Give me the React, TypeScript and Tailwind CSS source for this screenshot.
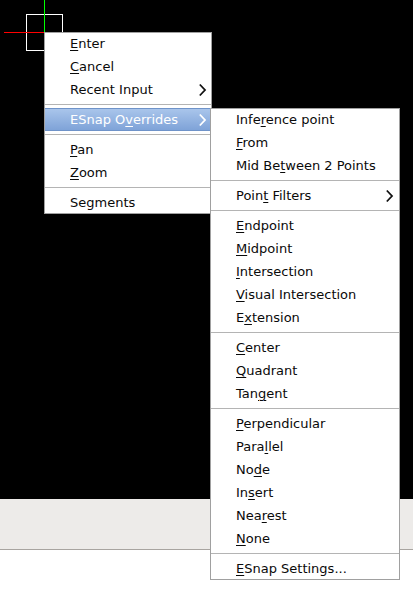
import React from "react";

type Item =
  | { sep: true }
  | { sep?: false; label: string; u?: number; sub?: boolean; hl?: boolean };

const mainItems: Item[] = [
  { label: "Enter", u: 0 },
  { label: "Cancel", u: 0 },
  { label: "Recent Input", sub: true },
  { sep: true },
  { label: "ESnap Overrides", u: 7, sub: true, hl: true },
  { sep: true },
  { label: "Pan", u: 0 },
  { label: "Zoom", u: 0 },
  { sep: true },
  { label: "Segments" },
];

const subItems: Item[] = [
  { label: "Inference point", u: 4 },
  { label: "From", u: 0 },
  { label: "Mid Between 2 Points", u: 6 },
  { sep: true },
  { label: "Point Filters", u: 4, sub: true },
  { sep: true },
  { label: "Endpoint", u: 0 },
  { label: "Midpoint", u: 0 },
  { label: "Intersection", u: 0 },
  { label: "Visual Intersection", u: 0 },
  { label: "Extension", u: 1 },
  { sep: true },
  { label: "Center", u: 0 },
  { label: "Quadrant", u: 0 },
  { label: "Tangent", u: 3 },
  { sep: true },
  { label: "Perpendicular", u: 0 },
  { label: "Parallel", u: 4 },
  { label: "Node", u: 2 },
  { label: "Insert", u: 2 },
  { label: "Nearest", u: 3 },
  { label: "None", u: 0 },
  { sep: true },
  { label: "ESnap Settings...", u: 0 },
];

function Label({ text, u }: { text: string; u?: number }) {
  if (u === undefined) return <span>{text}</span>;
  return (
    <span>
      {text.slice(0, u)}
      <span className="underline decoration-1 underline-offset-[2px]">{text[u]}</span>
      {text.slice(u + 1)}
    </span>
  );
}

function Chevron({ white }: { white?: boolean }) {
  return (
    <svg width="9" height="14" viewBox="0 0 9 14" className="block">
      <path
        d="M1.8 1.5 L7 7 L1.8 12.5"
        fill="none"
        stroke={white ? "#ffffff" : "#111111"}
        strokeWidth="1.8"
      />
    </svg>
  );
}

function Menu({ items, arrowRight }: { items: Item[]; arrowRight: number }) {
  return (
    <div className="flex flex-col">
      {items.map((it, i) => {
        if (it.sep) {
          return (
            <div key={i} className="h-[7px] flex items-center">
              <div className="h-px w-full bg-[#b4b4b4]" />
            </div>
          );
        }
        return (
          <div
            key={i}
            className={
              "relative h-[23px] flex items-center pl-[25px] text-[13px] leading-[23px] " +
              (it.hl
                ? "bg-gradient-to-b from-[#a9c5eb] to-[#7fa3d8] text-white border-y border-[#6f93c9] leading-[21px]"
                : "text-[#0a0a0a]")
            }
          >
            <Label text={it.label} u={it.u} />
            {it.sub && (
              <div className="absolute top-1/2 -translate-y-1/2" style={{ right: arrowRight }}>
                <Chevron white={it.hl} />
              </div>
            )}
          </div>
        );
      })}
    </div>
  );
}

export default function App() {
  return (
    <div
      className="relative w-[413px] h-[591px] overflow-hidden bg-white"
      style={{ fontFamily: '"DejaVu Sans", "Liberation Sans", sans-serif' }}
    >
      <div className="flex flex-col h-full">
        <div className="h-[499px] bg-black" />
        <div className="h-[51px] bg-[#edebe9] border-b border-[#a8a4a0]" />
        <div className="flex-1 bg-white" />
      </div>

      {/* cursor on canvas */}
      <div className="absolute left-[26px] top-[14px] w-[37px] h-[37px] border border-white" />
      <div className="absolute left-[44px] top-0 w-px h-[32px] bg-[#00ff00]" />
      <div className="absolute left-[4px] top-[32px] w-[40px] h-px bg-[#ff0000]" />

      {/* main context menu */}
      <div className="absolute left-[44px] top-[32px] w-[168px] bg-white border-x border-[#a0a0a0] shadow-[inset_0_1px_0_#a0a0a0,inset_0_-1px_0_#a0a0a0]">
        <Menu items={mainItems} arrowRight={4} />
      </div>

      {/* submenu */}
      <div className="absolute left-[210px] top-[108px] w-[190px] bg-white border-x border-[#a0a0a0] shadow-[inset_0_1px_0_#a0a0a0,inset_0_-1px_0_#a0a0a0]">
        <Menu items={subItems} arrowRight={5} />
      </div>
    </div>
  );
}
